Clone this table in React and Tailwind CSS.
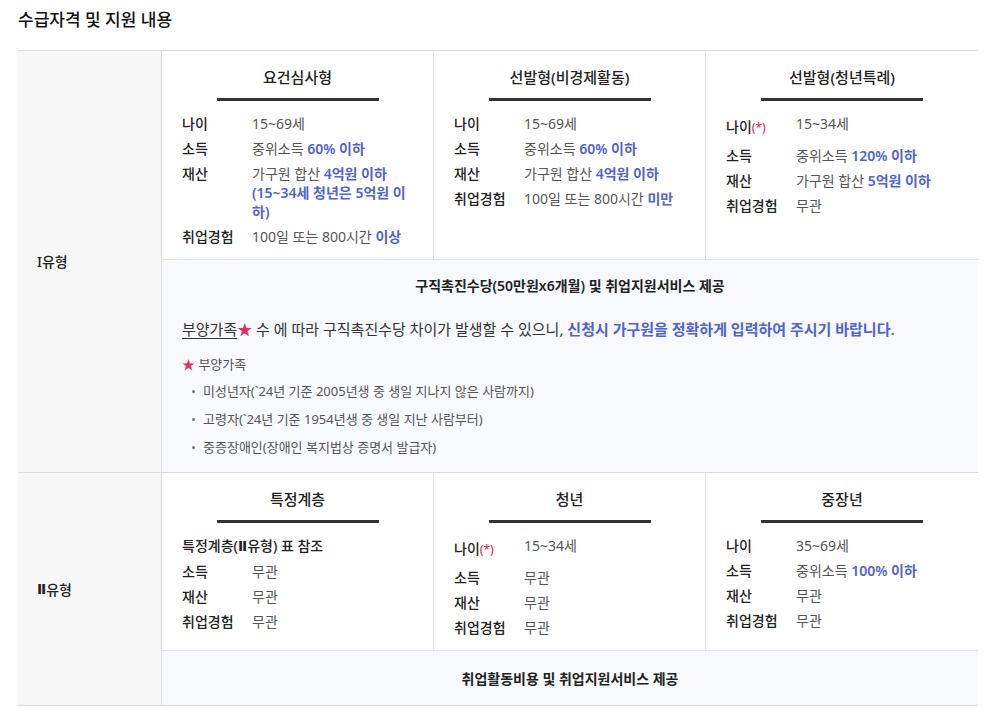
import React from "react";

const font = { fontFamily: '"Noto Sans", "Noto Sans CJK KR", sans-serif' };

const Hi = ({ children }) => (
  <span className="font-semibold text-[#4f63d2]">{children}</span>
);

const Star = () => <span className="text-[#e62e5c]">★</span>;

const Req = () => <span className="text-[12px] text-[#e62e5c]">(*)</span>;

// roman numeral II, narrow glyph like the original
const Two = () => (
  <span
    className="font-bold"
    style={{ fontFamily: '"DejaVu Sans", "Noto Sans CJK KR", sans-serif' }}
  >
    Ⅱ
  </span>
);

function Row({ label, children, tall }) {
  return (
    <div className="flex items-start py-[3px] leading-[19px]">
      <div
        className={`w-[70px] shrink-0 font-medium text-[#222] ${
          tall ? "py-[3px]" : ""
        }`}
      >
        {label}
      </div>
      <div className="text-[#555]">{children}</div>
    </div>
  );
}

function TypeCell({ title, children, last }) {
  return (
    <div
      className={`px-5 pt-[15px] pb-[10px] ${
        last ? "" : "border-r border-[#e3e3e3]"
      }`}
    >
      <div className="text-center text-[15px] leading-[22px] font-medium text-[#222]">
        {title}
      </div>
      <div className="mx-auto mt-[10px] h-[3px] w-[162px] bg-[#333]" />
      <div className="mt-[10px] text-[14px]">{children}</div>
    </div>
  );
}

export default function App() {
  return (
    <div className="min-h-screen bg-white pl-[18px] pr-[7px] pt-[8px]" style={font}>
      <h2 className="text-[17px] leading-[24px] font-medium text-[#111]">
        수급자격 및 지원 내용
      </h2>

      <div className="mt-[18px] border-t border-b border-[#dcdcdc]">
        {/* I유형 */}
        <div className="flex border-b border-[#dcdcdc]">
          <div className="flex w-[144px] shrink-0 items-center border-r border-[#dcdcdc] bg-[#f7f7f7] pl-[19px] text-[14px] font-medium text-[#222]">
            I유형
          </div>
          <div className="flex-1">
            <div className="grid grid-cols-3 border-b border-[#e3e3e3]">
              <TypeCell title="요건심사형">
                <Row label="나이">15~69세</Row>
                <Row label="소득">
                  중위소득 <Hi>60% 이하</Hi>
                </Row>
                <Row label="재산">
                  가구원 합산 <Hi>4억원 이하</Hi>
                  <br />
                  <Hi>(15~34세 청년은 5억원 이</Hi>
                  <br />
                  <Hi>하)</Hi>
                </Row>
                <Row label="취업경험">
                  100일 또는 800시간 <Hi>이상</Hi>
                </Row>
              </TypeCell>
              <TypeCell title="선발형(비경제활동)">
                <Row label="나이">15~69세</Row>
                <Row label="소득">
                  중위소득 <Hi>60% 이하</Hi>
                </Row>
                <Row label="재산">
                  가구원 합산 <Hi>4억원 이하</Hi>
                </Row>
                <Row label="취업경험">
                  100일 또는 800시간 <Hi>미만</Hi>
                </Row>
              </TypeCell>
              <TypeCell title="선발형(청년특례)" last>
                <Row
                  tall
                  label={
                    <>
                      나이
                      <Req />
                    </>
                  }
                >
                  15~34세
                </Row>
                <Row label="소득">
                  중위소득 <Hi>120% 이하</Hi>
                </Row>
                <Row label="재산">
                  가구원 합산 <Hi>5억원 이하</Hi>
                </Row>
                <Row label="취업경험">무관</Row>
              </TypeCell>
            </div>

            <div className="bg-[#f8f9fd] px-5 pt-[16px] pb-[15px]">
              <div className="text-center text-[14px] leading-[20px] font-semibold text-[#222]">
                구직촉진수당(50만원x6개월) 및 취업지원서비스 제공
              </div>
              <p className="mt-[22px] text-[15px] leading-[22px] text-[#333]">
                <span className="underline underline-offset-[3px]">부양가족</span>
                <Star /> 수 에 따라 구직촉진수당 차이가 발생할 수 있으니,{" "}
                <Hi>신청시 가구원을 정확하게 입력하여 주시기 바랍니다.</Hi>
              </p>
              <div className="mt-[14px] text-[13px] leading-[20px] text-[#555]">
                <Star /> 부양가족
              </div>
              <ul className="mt-[7px] flex flex-col gap-[8px] text-[13px] leading-[20px] text-[#555]">
                <li className="flex items-center">
                  <span className="mr-[8px] ml-[10px] h-[3px] w-[3px] rounded-full bg-[#777]" />
                  미성년자(`24년 기준 2005년생 중 생일 지나지 않은 사람까지)
                </li>
                <li className="flex items-center">
                  <span className="mr-[8px] ml-[10px] h-[3px] w-[3px] rounded-full bg-[#777]" />
                  고령자(`24년 기준 1954년생 중 생일 지난 사람부터)
                </li>
                <li className="flex items-center">
                  <span className="mr-[8px] ml-[10px] h-[3px] w-[3px] rounded-full bg-[#777]" />
                  중증장애인(장애인 복지법상 증명서 발급자)
                </li>
              </ul>
            </div>
          </div>
        </div>

        {/* II유형 */}
        <div className="flex">
          <div className="flex w-[144px] shrink-0 items-center border-r border-[#dcdcdc] bg-[#f7f7f7] pl-[19px] text-[14px] font-medium text-[#222]">
            <Two />
            유형
          </div>
          <div className="flex-1">
            <div className="grid grid-cols-3 border-b border-[#e3e3e3]">
              <TypeCell title="특정계층">
                <div className="pt-[3px] pb-[3px] leading-[19px] font-medium text-[#222]">
                  특정계층(<Two />유형) 표 참조
                </div>
                <Row label="소득">무관</Row>
                <Row label="재산">무관</Row>
                <Row label="취업경험">무관</Row>
              </TypeCell>
              <TypeCell title="청년">
                <Row
                  tall
                  label={
                    <>
                      나이
                      <Req />
                    </>
                  }
                >
                  15~34세
                </Row>
                <Row label="소득">무관</Row>
                <Row label="재산">무관</Row>
                <Row label="취업경험">무관</Row>
              </TypeCell>
              <TypeCell title="중장년" last>
                <Row label="나이">35~69세</Row>
                <Row label="소득">
                  중위소득 <Hi>100% 이하</Hi>
                </Row>
                <Row label="재산">무관</Row>
                <Row label="취업경험">무관</Row>
              </TypeCell>
            </div>
            <div className="flex h-[54px] items-center justify-center bg-[#f8f9fd] text-[14px] font-semibold text-[#222]">
              취업활동비용 및 취업지원서비스 제공
            </div>
          </div>
        </div>
      </div>
    </div>
  );
}
